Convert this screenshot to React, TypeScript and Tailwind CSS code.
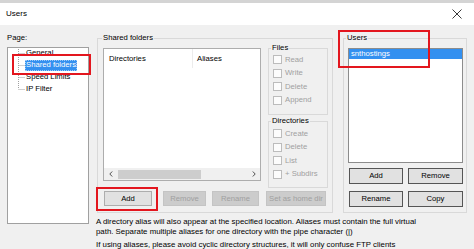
import React from "react";

function Check({ label }: { label: string }) {
  return (
    <div className="flex items-center h-[13.5px] pl-[4px]">
      <span className="w-[9px] h-[9px] border border-[#bcbcbc] bg-[#fcfcfc] shrink-0" />
      <span className="ml-[3px] text-[#a0a0a0] whitespace-nowrap">{label}</span>
    </div>
  );
}

function Chevron({ dir }: { dir: "l" | "r" }) {
  return (
    <svg width="4" height="6" viewBox="0 0 4 6">
      {dir === "l" ? (
        <polyline points="3.2,0.5 0.8,3 3.2,5.5" fill="none" stroke="#505050" strokeWidth="1" />
      ) : (
        <polyline points="0.8,0.5 3.2,3 0.8,5.5" fill="none" stroke="#505050" strokeWidth="1" />
      )}
    </svg>
  );
}

export default function App() {
  return (
    <div className="relative w-[474px] h-[249px] overflow-hidden bg-[#f0f0f0] text-[7.7px] leading-[10px] text-black [font-family:'Liberation_Sans',Arial,sans-serif]">
      {/* title bar */}
      <div className="h-[25px] bg-white border-t-[3px] border-[#d4d4d4] flex items-center justify-between pl-[6px] pr-[12px]">
        <span className="text-[8px]">Users</span>
        <svg width="10" height="10" viewBox="0 0 10 10">
          <path d="M0.5 0.5 L9.5 9.5 M9.5 0.5 L0.5 9.5" stroke="#222" strokeWidth="0.9" />
        </svg>
      </div>

      <div className="flex pt-[8px] pl-[7px]">
        {/* left column */}
        <div className="w-[82px] flex flex-col shrink-0">
          <div className="h-[10px]">Page:</div>
          <div className="mt-[4px] h-[177px] border border-[#a0a0a0] bg-white">
            <div className="flex -mt-[1px]">
              <svg width="17" height="48" className="shrink-0">
                <g stroke="#a0a0a0" strokeWidth="1" strokeDasharray="1 1" fill="none">
                  <line x1="10.5" y1="2" x2="10.5" y2="42" />
                  <line x1="10.5" y1="6.5" x2="17" y2="6.5" />
                  <line x1="10.5" y1="18.5" x2="17" y2="18.5" />
                  <line x1="10.5" y1="30.5" x2="17" y2="30.5" />
                  <line x1="10.5" y1="42.5" x2="17" y2="42.5" />
                </g>
              </svg>
              <div className="flex flex-col items-start">
                <div className="h-[12px] flex items-center px-[1px]">General</div>
                <div className="h-[12px] flex items-center">
                  <span className="px-[1px] h-[11px] flex items-center bg-[#3390f0] text-white outline outline-1 outline-dotted outline-[#9ccaf8] -outline-offset-1">
                    Shared folders
                  </span>
                </div>
                <div className="h-[12px] flex items-center px-[1px]">Speed Limits</div>
                <div className="h-[12px] flex items-center px-[1px]">IP Filter</div>
              </div>
            </div>
          </div>
        </div>

        {/* right area */}
        <div className="ml-[8px] flex flex-col">
          <div className="flex">
            {/* Shared folders group */}
            <fieldset className="w-[236px] border border-[#d9d9d9]">
              <legend className="ml-[4px] px-[1px] leading-[10px]">Shared folders</legend>
              <div className="flex flex-col pl-[5px] pr-[4px] pb-[6px]">
                <div className="flex gap-[7px] h-[145px]">
                  {/* list view */}
                  <div className="mt-[5px] w-[158px] h-[133px] border border-[#adadad] bg-white flex flex-col">
                    <div className="h-[19px] flex items-center">
                      <div className="w-[89px] h-full flex items-center pl-[5px] border-r border-[#ececec]">Directories</div>
                      <div className="pl-[4px]">Aliases</div>
                    </div>
                    <div className="flex-1" />
                    <div className="h-[12px] bg-[#f0f0f0] flex items-center">
                      <div className="w-[13px] flex justify-center">
                        <Chevron dir="l" />
                      </div>
                      <div className="ml-[1px] w-[83px] h-[9px] bg-[#cdcdcd]" />
                      <div className="flex-1" />
                      <div className="w-[13px] flex justify-center">
                        <Chevron dir="r" />
                      </div>
                    </div>
                  </div>
                  {/* files / directories */}
                  <div className="w-[60px] flex flex-col">
                    <fieldset className="h-[72px] border border-[#d9d9d9]">
                      <legend className="ml-[2px] px-[1px] leading-[10px]">Files</legend>
                      <Check label="Read" />
                      <Check label="Write" />
                      <Check label="Delete" />
                      <Check label="Append" />
                    </fieldset>
                    <fieldset className="mt-[1px] h-[72px] border border-[#d9d9d9]">
                      <legend className="ml-[2px] px-[1px] leading-[10px]">Directories</legend>
                      <div className="pt-[1px]">
                        <Check label="Create" />
                        <Check label="Delete" />
                        <Check label="List" />
                        <Check label="+ Subdirs" />
                      </div>
                    </fieldset>
                  </div>
                </div>
                <div className="mt-[3px] flex h-[15px]">
                  <div className="ml-[1px] w-[48px] h-[15px] border border-[#adadad] bg-[#e1e1e1] flex items-center justify-center">Add</div>
                  <div className="ml-[11px] w-[43px] h-[15px] border border-[#c4c4c4] bg-[#cccccc] text-[#a0a0a0] flex items-center justify-center">Remove</div>
                  <div className="ml-[6px] w-[47px] h-[15px] border border-[#c4c4c4] bg-[#cccccc] text-[#a0a0a0] flex items-center justify-center">Rename</div>
                  <div className="ml-[7px] w-[60px] h-[15px] border border-[#c4c4c4] bg-[#cccccc] text-[#a0a0a0] flex items-center justify-center whitespace-nowrap">Set as home dir</div>
                </div>
              </div>
            </fieldset>

            {/* Users group */}
            <fieldset className="ml-[10px] w-[124px] border border-[#d9d9d9]">
              <legend className="ml-[2px] px-[1px] leading-[10px]">Users</legend>
              <div className="flex flex-col pb-[5px]">
                <div className="mt-[5px] ml-[4px] w-[115px] h-[115px] border border-[#8c8c8c] bg-white">
                  <div className="h-[10px] bg-[#3390f0] text-white pl-[2px] flex items-center">snthostings</div>
                </div>
                <div className="mt-[5px] ml-[5px] flex gap-[5px]">
                  <div className="w-[54px] h-[16px] border border-[#555555] bg-[#e1e1e1] flex items-center justify-center">Add</div>
                  <div className="w-[55px] h-[16px] border border-[#555555] bg-[#e1e1e1] flex items-center justify-center">Remove</div>
                </div>
                <div className="mt-[7px] ml-[5px] flex gap-[5px]">
                  <div className="w-[54px] h-[16px] border border-[#555555] bg-[#e1e1e1] flex items-center justify-center">Rename</div>
                  <div className="w-[55px] h-[16px] border border-[#555555] bg-[#e1e1e1] flex items-center justify-center">Copy</div>
                </div>
              </div>
            </fieldset>
          </div>

          {/* help text */}
          <div className="mt-[4px] -ml-[1px] flex flex-col whitespace-nowrap text-[7.85px]">
            <div>A directory alias will also appear at the specified location. Aliases must contain the full virtual</div>
            <div>path. Separate multiple aliases for one directory with the pipe character (|)</div>
            <div className="mt-[3px]">If using aliases, please avoid cyclic directory structures, it will only confuse FTP clients</div>
          </div>
        </div>
      </div>

      {/* red annotation boxes */}
      <div className="absolute left-[12px] top-[54px] w-[79px] h-[21px] border-2 border-[#e3161e]" />
      <div className="absolute left-[96px] top-[187px] w-[62px] h-[24px] border-2 border-[#e3161e]" />
      <div className="absolute left-[338px] top-[30px] w-[92px] h-[38px] border-2 border-[#e3161e]" />
    </div>
  );
}
